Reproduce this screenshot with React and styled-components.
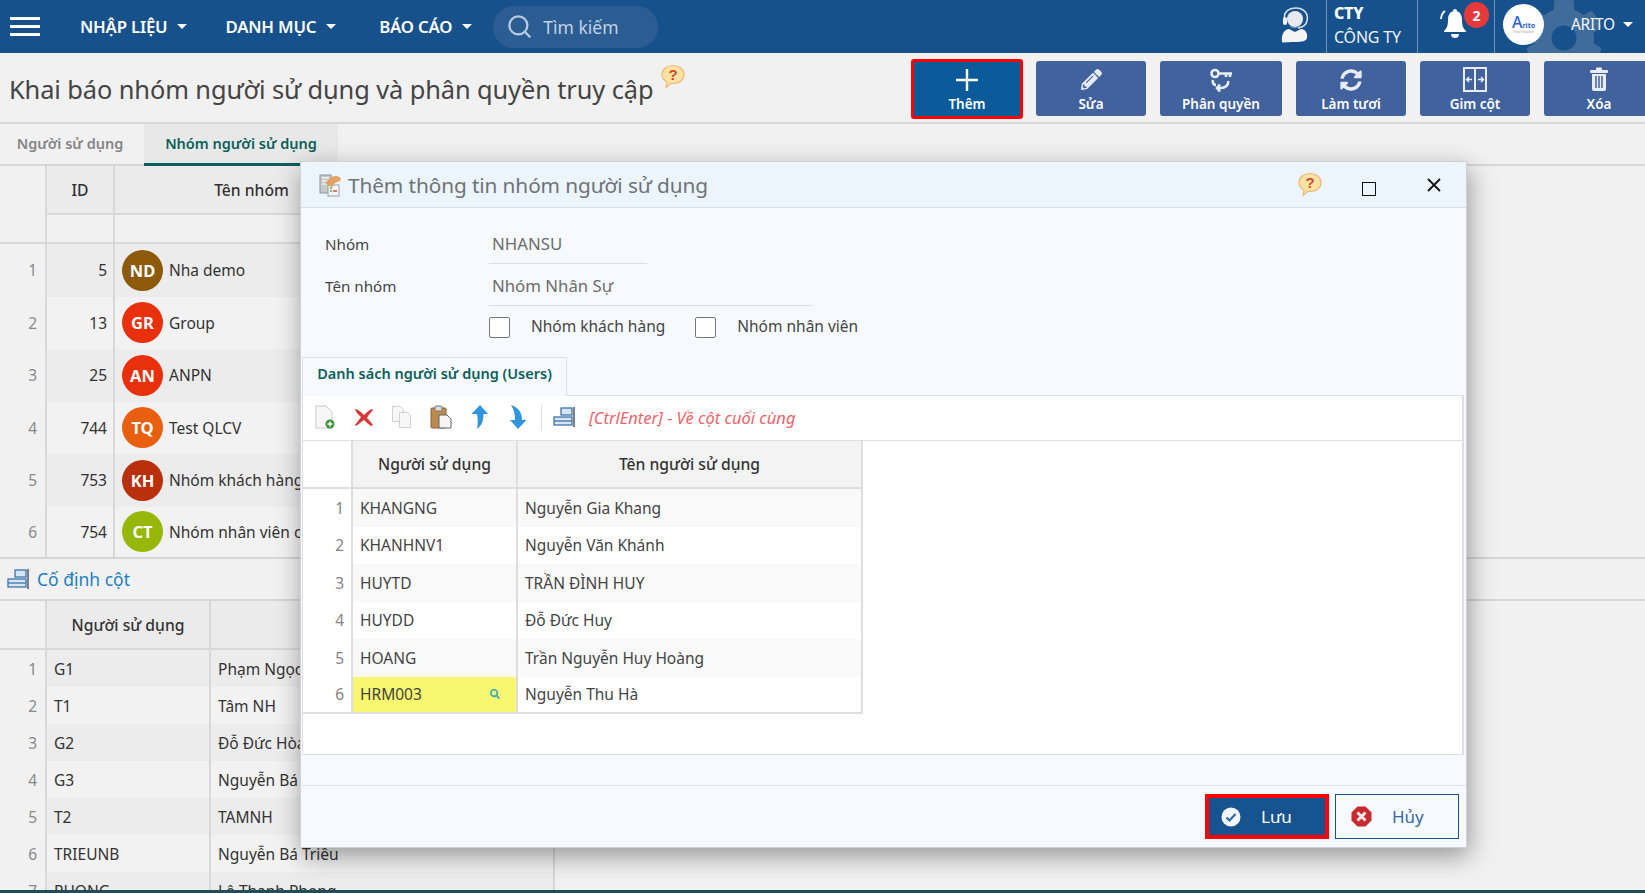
import React from "react";
import styled, { createGlobalStyle } from "styled-components";
import { FaCog, FaPencilAlt, FaSyncAlt, FaSearch } from "react-icons/fa";
import { Search as SearchGlyph } from "lucide-react";

const GlobalStyle = createGlobalStyle`
  html, body { margin: 0; padding: 0; background: #f1f1f1; }
  * { box-sizing: border-box; }
  body { font-family: "Noto Sans", "Open Sans", sans-serif; color: #333; overflow: hidden; }
`;

const Page = styled.div`
  position: relative;
  width: 1645px;
  height: 893px;
  overflow: hidden;
  display: flex;
  flex-direction: column;
  background: #f1f1f1;
`;

/* top bar */
const Header = styled.header`
  height: 53px;
  flex: none;
  display: flex;
  align-items: center;
  background: #17518b;
  color: #fff;
  padding-left: 10px;
`;

const Burger = styled.div`
  width: 30px;
  height: 19px;
  margin-right: 40px;
  display: flex;
  flex-direction: column;
  justify-content: space-between;
  span { height: 3px; background: #fff; display: block; }
`;

const NavItem = styled.div`
  display: flex;
  align-items: center;
  gap: 10px;
  margin-right: ${(p) => p.$gap}px;
  font-size: 16.8px;
  font-weight: 600;
  white-space: nowrap;
  letter-spacing: -0.2px;
`;

const Caret = styled.i`
  display: block;
  width: 0;
  height: 0;
  border-left: 5px solid transparent;
  border-right: 5px solid transparent;
  border-top: 5px solid #fff;
`;

const Search = styled.div`
  width: 165px;
  height: 42px;
  border-radius: 21px;
  background: #2b5d92;
  display: flex;
  align-items: center;
  gap: 10px;
  padding-left: 13px;
  color: #c3d2e2;
  font-size: 17.5px;
  svg { color: #b9cbde; }
`;

const HeaderRight = styled.div`
  margin-left: auto;
  height: 100%;
  display: flex;
`;

const HeaderCell = styled.div`
  position: relative;
  height: 100%;
  width: ${(p) => p.$w}px;
  display: flex;
  align-items: center;
  border-left: ${(p) => (p.$line ? "1px solid #6d93ba" : "none")};
`;

const Company = styled.div`
  padding: 0 0 3px 7px;
  font-size: 16px;
  line-height: 24px;
  letter-spacing: -0.2px;
  color: #eef3f8;
  b { display: block; font-weight: 800; color: #fff; }
`;

const Badge = styled.span`
  position: absolute;
  left: 46px;
  top: 2px;
  width: 25px;
  height: 26px;
  border-radius: 50%;
  background: #e53a3c;
  color: #fff;
  font-size: 14px;
  font-weight: 700;
  display: flex;
  align-items: center;
  justify-content: center;
`;

const Gear = styled.div`
  position: absolute;
  inset: 0;
  overflow: hidden;
  color: #3f6c9b;
  svg { position: absolute; left: 29px; top: -2px; }
`;

const Logo = styled.div`
  position: relative;
  width: 41px;
  height: 41px;
  margin: 0 0 4px 8px;
  border-radius: 50%;
  background: #fff;
  color: #2b61d8;
  display: flex;
  flex-direction: column;
  align-items: center;
  justify-content: center;
  font-size: 7px;
  font-weight: 700;
  line-height: 9px;
  big { font-size: 16px; line-height: 13px; font-weight: 500; }
  small { font-size: 3px; line-height: 4px; font-weight: 400; color: #9a9a9a; }
`;

const UserName = styled.div`
  position: relative;
  margin: 0 0 5px 27px;
  display: flex;
  align-items: center;
  gap: 8px;
  font-size: 15.5px;
  letter-spacing: -0.3px;
  color: #f3f6fa;
`;

/* title and action buttons */
const ActionBar = styled.div`
  height: 71px;
  flex: none;
  display: flex;
  padding: 8px 0 0 9px;
  border-bottom: 2px solid #d6d6d6;
`;

const Title = styled.h1`
  margin: 0;
  padding-top: 9px;
  font-size: 25.4px;
  line-height: 38px;
  font-weight: 400;
  color: #444;
  letter-spacing: -0.1px;
  white-space: nowrap;
`;

const TitleHelp = styled.div`
  margin: 3px 0 0 7px;
`;

const Actions = styled.div`
  margin-left: auto;
  margin-right: -9px;
  display: flex;
  gap: 14px;
  align-items: flex-start;
`;

const ActionButton = styled.button`
  flex: none;
  width: ${(p) => (p.$active ? 112 : p.$w || 110)}px;
  height: ${(p) => (p.$active ? 60 : 55)}px;
  margin: ${(p) => (p.$active ? "-2px -1px 0 0" : "0")};
  padding: 0 0 3px;
  background: ${(p) => (p.$active ? "#0b5b9b" : "#41629d")};
  border: ${(p) => (p.$active ? "3px solid #ff0000" : "none")};
  border-radius: 3px;
  color: #fff;
  font-family: inherit;
  font-size: 13.5px;
  font-weight: 600;
  line-height: 18px;
  display: flex;
  flex-direction: column;
  align-items: center;
  justify-content: flex-end;
`;

const ActionIcon = styled.span`
  height: 25px;
  margin-bottom: 3px;
  display: flex;
  align-items: center;
  color: #e8edf5;
`;

/* tabs */
const Tabs = styled.div`
  height: 42px;
  flex: none;
  display: flex;
  border-bottom: 2px solid #d6d6d6;
`;

const Tab = styled.div`
  width: ${(p) => p.$w}px;
  height: 42px;
  margin-left: ${(p) => (p.$active ? 4 : 0)}px;
  text-align: center;
  font-size: 14.5px;
  line-height: 39px;
  font-weight: 600;
  color: ${(p) => (p.$active ? "#0b5f5b" : "#858585")};
  background: ${(p) => (p.$active ? "#e8e8e8" : "transparent")};
  border-bottom: ${(p) => (p.$active ? "3px solid #0b5f5b" : "none")};
`;

/* background grids */
const Grid = styled.div`
  width: ${(p) => p.$w}px;
  display: grid;
  grid-template-columns: ${(p) => p.$cols};
`;

const HeadCell = styled.div`
  height: ${(p) => p.$h}px;
  display: flex;
  align-items: center;
  justify-content: center;
  font-size: 15.7px;
  font-weight: 500;
  color: #333;
  background: ${(p) => (p.$plain ? "transparent" : "#ebebeb")};
  border-right: 2px solid #d8d8d8;
  border-bottom: ${(p) => (p.$open ? "none" : "2px solid #d8d8d8")};
`;

const FilterCell = styled.div`
  height: 29px;
  border-right: 2px solid #d8d8d8;
  border-bottom: 2px solid #d8d8d8;
`;

const NumCell = styled.div`
  height: ${(p) => p.$h}px;
  display: flex;
  align-items: center;
  justify-content: flex-end;
  padding-right: 8px;
  font-size: 15.5px;
  color: #8a8a8a;
  border-right: 2px solid #d8d8d8;
  border-bottom: ${(p) => (p.$last ? "2px solid #d8d8d8" : "none")};
`;

const Cell = styled.div`
  height: ${(p) => p.$h}px;
  display: flex;
  align-items: center;
  justify-content: ${(p) => (p.$right ? "flex-end" : "flex-start")};
  padding: 0 ${(p) => (p.$right ? 6 : 7)}px;
  font-size: 15.5px;
  color: #333;
  white-space: nowrap;
  overflow: hidden;
  background: ${(p) => (p.$odd ? "#ececec" : "#f2f2f2")};
  border-right: 2px solid #d8d8d8;
  border-bottom: ${(p) => (p.$last ? "2px solid #d8d8d8" : "none")};
`;

const Avatar = styled.span`
  flex: none;
  width: 41px;
  height: 41px;
  margin-right: 6px;
  border-radius: 50%;
  background: ${(p) => p.$color};
  color: #fff;
  font-size: 16.5px;
  font-weight: 700;
  display: flex;
  align-items: center;
  justify-content: center;
`;

const SectionBar = styled.div`
  height: 44px;
  flex: none;
  margin-top: -2px;
  display: flex;
  align-items: center;
  gap: 8px;
  padding-left: 7px;
  color: #1d7fc1;
  font-size: 17.5px;
  border-top: 2px solid #d6d6d6;
  border-bottom: 2px solid #d6d6d6;
`;

const LowerWrap = styled.div`
  flex: 1;
  overflow: hidden;
`;

const BottomLine = styled.div`
  height: 3px;
  flex: none;
  background: #1f4d5c;
`;

/* dialog */
const Modal = styled.div`
  position: absolute;
  left: 300px;
  top: 161px;
  width: 1167px;
  height: 687px;
  display: flex;
  flex-direction: column;
  background: #f6fafe;
  border: 1px solid #cfd3d6;
  box-shadow: 2px 8px 24px rgba(0, 0, 0, 0.38);
`;

const ModalHead = styled.div`
  height: 46px;
  flex: none;
  display: flex;
  align-items: center;
  padding-left: 17px;
  background: #edf5fc;
  border-bottom: 1px solid #dcdfe2;
`;

const ModalTitle = styled.div`
  margin-left: 6px;
  font-size: 20.8px;
  color: #6d7378;
  letter-spacing: -0.1px;
`;

const ModalControls = styled.div`
  margin-left: auto;
  display: flex;
  align-items: center;
  padding-right: 25px;
`;

const MaxBox = styled.span`
  display: block;
  width: 14px;
  height: 14px;
  margin: 8px 51px 0 39px;
  border: 1.5px solid #111;
`;

const FormRow = styled.div`
  display: flex;
  height: ${(p) => p.$h}px;
  padding: ${(p) => p.$top}px 0 0 24px;
`;

const FieldLabel = styled.div`
  width: 164px;
  font-size: 15.2px;
  line-height: 30px;
  color: #444;
`;

const FieldValue = styled.div`
  width: ${(p) => p.$w}px;
  height: 35px;
  padding-left: 3px;
  font-size: 16.8px;
  line-height: 30px;
  color: #6c6c6c;
  border-bottom: 1px solid #dcdfe3;
`;

const CheckRow = styled.div`
  display: flex;
  align-items: center;
  margin: 11px 0 0 188px;
  height: 21px;
`;

const Box = styled.span`
  flex: none;
  width: 21px;
  height: 21px;
  border: 1px solid #777;
  border-radius: 2px;
  background: #fff;
`;

const CheckLabel = styled.span`
  margin: 0 ${(p) => p.$gap}px 0 21px;
  padding-bottom: 3px;
  font-size: 15.5px;
  color: #444;
  white-space: nowrap;
`;

const InnerTabs = styled.div`
  margin: 19px 0 0 1px;
  height: 38px;
  display: flex;
`;

const InnerTab = styled.div`
  position: relative;
  z-index: 1;
  width: 265px;
  height: 39px;
  background: #f6fafe;
  border: 1px solid #dcdfe3;
  border-bottom: none;
  text-align: center;
  font-size: 14.5px;
  font-weight: 600;
  line-height: 31px;
  color: #0b5f5b;
`;

const Panel = styled.div`
  margin: 0 2px 0 1px;
  height: 360px;
  display: flex;
  flex-direction: column;
  background: #fff;
  border: 1px solid #dcdfe3;
  border-right-width: 2px;
`;

const Toolbar = styled.div`
  height: 45px;
  flex: none;
  display: flex;
  align-items: center;
  padding: 0 0 2px 3px;
  border-bottom: 1px solid #dcdfe3;
`;

const ToolSlot = styled.span`
  width: 38.5px;
  display: flex;
  justify-content: center;
`;

const ToolSep = styled.span`
  width: 1px;
  height: 25px;
  margin: 0 11px 0 4px;
  background: #dcdfe3;
`;

const ToolHint = styled.span`
  margin-left: 14px;
  font-size: 16.5px;
  font-style: italic;
  color: #f0636b;
`;

const UserGrid = styled.div`
  width: 560px;
  display: grid;
  grid-template-columns: 50px 165px 345px;
`;

const UserHead = styled.div`
  height: 48px;
  display: flex;
  align-items: center;
  justify-content: center;
  font-size: 15.7px;
  font-weight: 500;
  color: #333;
  background: ${(p) => (p.$plain ? "#fff" : "#f3f3f3")};
  border-right: 2px solid #dedede;
  border-bottom: 2px solid #dedede;
`;

const UserNum = styled.div`
  height: 37.5px;
  display: flex;
  align-items: center;
  justify-content: flex-end;
  padding-right: 7px;
  font-size: 15.5px;
  color: #858585;
  border-right: 2px solid #dedede;
  border-bottom: ${(p) => (p.$last ? "2px solid #dedede" : "none")};
`;

const UserCell = styled.div`
  height: 37.5px;
  display: flex;
  align-items: center;
  justify-content: space-between;
  padding: 0 8px 0 7px;
  font-size: 15.5px;
  color: #444;
  background: ${(p) => (p.$hit ? "#f8f76f" : p.$odd ? "#f9f9f9" : "#fff")};
  border-right: 2px solid #dedede;
  border-bottom: ${(p) => (p.$last ? "2px solid #dedede" : "none")};
  svg { color: #31a3c6; margin-right: 8px; }
`;

const ModalFoot = styled.div`
  margin-top: 30px;
  flex: 1;
  display: flex;
  justify-content: flex-end;
  gap: 6px;
  padding: 8px 7px 0 0;
  border-top: 1px solid #e2e4e6;
`;

const FootButton = styled.button`
  width: 124px;
  height: 45px;
  padding: 0 0 0 ${(p) => (p.$primary ? 12 : 15)}px;
  display: flex;
  align-items: center;
  gap: 20px;
  font-family: inherit;
  font-size: 17px;
  color: ${(p) => (p.$primary ? "#fff" : "#35699f")};
  background: ${(p) => (p.$primary ? "#17548f" : "transparent")};
  border: ${(p) => (p.$primary ? "4px solid #ff0000" : "1px solid #17548f")};
`;

const groups = [
  { id: 5, code: "ND", name: "Nha demo", color: "#8c5a0a" },
  { id: 13, code: "GR", name: "Group", color: "#e8300c" },
  { id: 25, code: "AN", name: "ANPN", color: "#e8300c" },
  { id: 744, code: "TQ", name: "Test QLCV", color: "#e95f10" },
  { id: 753, code: "KH", name: "Nhóm khách hàng", color: "#b8300c" },
  { id: 754, code: "CT", name: "Nhóm nhân viên công ty", color: "#97b80a" },
];

const lowerUsers = [
  ["G1", "Phạm Ngọc"],
  ["T1", "Tâm NH"],
  ["G2", "Đỗ Đức Hòa"],
  ["G3", "Nguyễn Bá"],
  ["T2", "TAMNH"],
  ["TRIEUNB", "Nguyễn Bá Triều"],
  ["PHONG", "Lê Thanh Phong"],
];

const dialogUsers = [
  ["KHANGNG", "Nguyễn Gia Khang"],
  ["KHANHNV1", "Nguyễn Văn Khánh"],
  ["HUYTD", "TRẦN ĐÌNH HUY"],
  ["HUYDD", "Đỗ Đức Huy"],
  ["HOANG", "Trần Nguyễn Huy Hoàng"],
  ["HRM003", "Nguyễn Thu Hà"],
];

const HelpIcon = () => (
  <svg width="26" height="25" viewBox="0 0 26 25">
    <path d="M13 1.500c6 0 11 3.700 11 9s-5 9-10.500 9c-.8 0-1.600-.1-2.300-.2L6 23.500l1-5.500C3.800 16.300 2 13.700 2 10.500c0-5.300 5-9 11-9z" fill="#fbe3a4" stroke="#eeb775" strokeWidth="1.200" />
    <text x="13" y="16" textAnchor="middle" fontSize="15" fontWeight="700" fill="#d9462c" fontFamily="Liberation Sans, sans-serif">?</text>
  </svg>
);

const SupportIcon = () => (
  <svg width="34" height="36" viewBox="0 0 34 36" fill="none" style={{ marginLeft: 3, marginBottom: 4 }}>
    <circle cx="16" cy="12" r="8" fill="#e6eaee" />
    <path d="M6 15C3 4 11 1 17 1s13 4 11 13c-.6 3-3 6-9 7" stroke="#d9dfe6" strokeWidth="1.500" />
    <rect x="4" y="10" width="4" height="8" rx="2" fill="#f4f4f4" />
    <path d="M11 19c2 2 8 2 10 0" stroke="#8fa4ba" strokeWidth="1" />
    <path d="M3 35c-1-8 3-13 7-13l6 3 6-3c4 0 7 4 6 9-.6 3-5 4-12 4S3 36 3 35z" fill="#f4f4f4" />
  </svg>
);

const BellIcon = () => (
  <svg width="32" height="32" viewBox="0 0 32 32" fill="#fff" style={{ marginLeft: 20, marginBottom: 6 }}>
    <circle cx="17" cy="3" r="2" />
    <path d="M17 3c5 0 7 4 7 9 0 7 2 9 4 11v1H6v-1c2-2 4-4 4-11 0-5 2-9 7-9z" />
    <path d="M13 26h8c0 3-2 4-4 4s-4-1-4-4z" />
    <path d="M7 3C4.500 5 3 8 3 11" fill="none" stroke="#fff" strokeWidth="1.800" />
  </svg>
);

const KeyIcon = () => (
  <svg width="24" height="24" viewBox="0 0 24 24" fill="none" stroke="#e8edf5" strokeWidth="2.600">
    <circle cx="6" cy="5.500" r="3.500" />
    <path d="M10 5.500h13M17 5.500v3.500M21 5.500v3.500" />
    <path d="M19 13c1 4-3 7-7 7H9M11 16.500L8 20l3 3.500" />
    <path d="M4 12c-1 3 1 5 3 5" />
  </svg>
);

const ColumnsIcon = () => (
  <svg width="24" height="25" viewBox="0 0 24 25" fill="none" stroke="#e8edf5">
    <rect x="1" y="1" width="22" height="23" strokeWidth="2" />
    <path d="M12 1v23" strokeWidth="2" />
    <path d="M9 12.500H3.500M6 10l-2.500 2.500L6 15M15 12.500h5.500M18 10l2.500 2.500L18 15" strokeWidth="1.500" />
  </svg>
);

const TrashIcon = () => (
  <svg width="20" height="25" viewBox="0 0 20 25" fill="#e8edf5">
    <rect x="1" y="3" width="18" height="3" rx="1" />
    <rect x="7" y="0.500" width="6" height="3" rx="1" />
    <path d="M3 7h14v15a2 2 0 0 1-2 2H5a2 2 0 0 1-2-2z" />
    <path d="M7 9v12M10 9v12M13 9v12" stroke="#41629d" strokeWidth="1.500" />
  </svg>
);

const TitleIcon = () => (
  <svg width="24" height="24" viewBox="0 0 24 24">
    <rect x="2" y="2" width="11" height="18" fill="#c6c9cc" stroke="#8f9499" />
    <path d="M4 5h7M4 8h7M4 11h7" stroke="#eef0f2" strokeWidth="1.500" />
    <rect x="10" y="12" width="11" height="11" fill="#f4f4f4" stroke="#9ba0a5" />
    <path d="M12 15h2M12 18h2" stroke="#57a957" strokeWidth="1.500" />
    <path d="M15 18h4" stroke="#d94f4f" strokeWidth="1.500" />
    <path d="M7 10l6-6c2-1 4-1 6-1l4 2-1 3-5 2-3 4-3-1-4-3z" fill="#e0a566" />
  </svg>
);

const NewDocIcon = () => (
  <svg width="22" height="24" viewBox="0 0 22 24">
    <path d="M2 1h10l6 6v16H2z" fill="#f7f7f7" stroke="#c9c9c9" />
    <circle cx="16" cy="19" r="4.500" fill="#3f9140" />
    <path d="M13.500 19h5M16 16.500v5" stroke="#fff" strokeWidth="1.500" />
  </svg>
);

const DeleteIcon = () => (
  <svg width="20" height="20" viewBox="0 0 20 20">
    <path d="M1 2c3 0 6 3 9 6 2-2 5-5 8-6l1 1c-2 3-5 5-6 8 2 2 4 4 6 7l-2 1c-3-2-5-4-7-6-3 2-5 4-8 6l-1-1c2-3 4-5 6-8C5 8 2 6 1 2z" fill="#d43a3a" />
  </svg>
);

const CopyIcon = () => (
  <svg width="22" height="24" viewBox="0 0 22 24" fill="#f7f7f7" stroke="#d0d0d0">
    <path d="M1.500 1.500h8l3 3v12h-11z" />
    <path d="M8.500 7.500h8l3 3v12h-11z" />
  </svg>
);

const PasteIcon = () => (
  <svg width="22" height="24" viewBox="0 0 22 24">
    <rect x="1" y="3" width="15" height="20" rx="1" fill="#bb8a4e" stroke="#8a6130" />
    <rect x="5" y="1" width="7" height="5" rx="1" fill="#ddd" stroke="#777" />
    <path d="M9 10h8l4 4v9H9z" fill="#f5f5f5" stroke="#666" />
  </svg>
);

const UpIcon = () => (
  <svg width="18" height="24" viewBox="0 0 18 24">
    <path d="M10 0l8 9h-4.500c0 6-1 11-6.500 15 1-4 1-10 0-15H1.500z" fill="#2f95dc" />
  </svg>
);

const DownIcon = () => (
  <svg width="18" height="24" viewBox="0 0 18 24">
    <path d="M9 24l-8-9h5C6 9 5 5 2 0c6 2 11 6 11 15h4.500z" fill="#2f95dc" />
  </svg>
);

const FixColumnIcon = () => (
  <svg width="22" height="22" viewBox="0 0 22 22" fill="#d6e6f5" stroke="#3f74a8" strokeWidth="1.300">
    <rect x="8" y="2" width="11" height="7" />
    <rect x="1" y="11" width="18" height="8" />
    <path d="M1 15h18" />
    <path d="M21 1v20" stroke="#556" strokeWidth="1.500" />
  </svg>
);

const SaveIcon = () => (
  <svg width="20" height="20" viewBox="0 0 20 20">
    <circle cx="10" cy="10" r="9.500" fill="#f2f5f9" />
    <path d="M5.500 10.500l3 3 6-6.500" fill="none" stroke="#2d6aa3" strokeWidth="2.200" />
  </svg>
);

const CancelIcon = () => (
  <svg width="21" height="21" viewBox="0 0 21 21">
    <path d="M6.500 0.500h8l6 6v8l-6 6h-8l-6-6v-8z" fill="#c92a2f" />
    <path d="M6.500 6.500l8 8M14.500 6.500l-8 8" stroke="#fbeaea" strokeWidth="3" />
  </svg>
);

const toolIcons = [NewDocIcon, DeleteIcon, CopyIcon, PasteIcon, UpIcon, DownIcon];

export default function App() {
  return (
    <Page>
      <GlobalStyle />
      <Header>
        <Burger>
          <span />
          <span />
          <span />
        </Burger>
        <NavItem $gap={38}>NHẬP LIỆU <Caret /></NavItem>
        <NavItem $gap={43}>DANH MỤC <Caret /></NavItem>
        <NavItem $gap={21}>BÁO CÁO <Caret /></NavItem>
        <Search>
          <SearchGlyph size={27} strokeWidth={2} />
          Tìm kiếm
        </Search>
        <HeaderRight>
          <HeaderCell $w={50}>
            <SupportIcon />
          </HeaderCell>
          <HeaderCell $w={91} $line>
            <Company>
              <b>CTY</b>
              CÔNG TY
            </Company>
          </HeaderCell>
          <HeaderCell $w={77} $line>
            <BellIcon />
            <Badge>2</Badge>
          </HeaderCell>
          <HeaderCell $w={151} $line>
            <Gear>
              <FaCog size={80} />
            </Gear>
            <Logo>
              <span><big>A</big>rito</span>
              <small>Smart Solution</small>
            </Logo>
            <UserName>
              ARITO <Caret />
            </UserName>
          </HeaderCell>
        </HeaderRight>
      </Header>

      <ActionBar>
        <Title>Khai báo nhóm người sử dụng và phân quyền truy cập</Title>
        <TitleHelp>
          <HelpIcon />
        </TitleHelp>
        <Actions>
          <ActionButton $active>
            <ActionIcon>
              <svg width="22" height="22" viewBox="0 0 22 22" stroke="#fff" strokeWidth="2.400">
                <path d="M11 0v22M0 11h22" />
              </svg>
            </ActionIcon>
            Thêm
          </ActionButton>
          <ActionButton>
            <ActionIcon><FaPencilAlt size={21} /></ActionIcon>
            Sửa
          </ActionButton>
          <ActionButton $w={122}>
            <ActionIcon><KeyIcon /></ActionIcon>
            Phân quyền
          </ActionButton>
          <ActionButton>
            <ActionIcon><FaSyncAlt size={22} /></ActionIcon>
            Làm tươi
          </ActionButton>
          <ActionButton>
            <ActionIcon><ColumnsIcon /></ActionIcon>
            Gim cột
          </ActionButton>
          <ActionButton>
            <ActionIcon><TrashIcon /></ActionIcon>
            Xóa
          </ActionButton>
        </Actions>
      </ActionBar>

      <Tabs>
        <Tab $w={140}>Người sử dụng</Tab>
        <Tab $w={194} $active>Nhóm người sử dụng</Tab>
      </Tabs>

      <Grid $w={400} $cols="47px 68px 1fr">
        <HeadCell $h={49} $plain $open />
        <HeadCell $h={49}>ID</HeadCell>
        <HeadCell $h={49}>
          <span style={{ marginRight: 10 }}>Tên nhóm</span>
        </HeadCell>
        <FilterCell />
        <FilterCell />
        <FilterCell />
        {groups.map((g, i) => {
          const last = i === groups.length - 1;
          return (
            <React.Fragment key={g.id}>
              <NumCell $h={52.5} $last={last}>{i + 1}</NumCell>
              <Cell $h={52.5} $right $odd={i % 2 === 0} $last={last}>{g.id}</Cell>
              <Cell $h={52.5} $odd={i % 2 === 0} $last={last}>
                <Avatar $color={g.color}>{g.code}</Avatar>
                {g.name}
              </Cell>
            </React.Fragment>
          );
        })}
      </Grid>

      <SectionBar>
        <FixColumnIcon />
        Cố định cột
      </SectionBar>

      <LowerWrap>
        <Grid $w={555} $cols="47px 164px 344px">
          <HeadCell $h={49} $plain />
          <HeadCell $h={49}>Người sử dụng</HeadCell>
          <HeadCell $h={49} />
          {lowerUsers.map(([code, name], i) => (
            <React.Fragment key={code}>
              <NumCell $h={37}>{i + 1}</NumCell>
              <Cell $h={37} $odd={i % 2 === 0}>{code}</Cell>
              <Cell $h={37} $odd={i % 2 === 0}>{name}</Cell>
            </React.Fragment>
          ))}
        </Grid>
      </LowerWrap>
      <BottomLine />

      <Modal>
        <ModalHead>
          <TitleIcon />
          <ModalTitle>Thêm thông tin nhóm người sử dụng</ModalTitle>
          <ModalControls>
            <HelpIcon />
            <MaxBox />
            <svg width="14" height="14" viewBox="0 0 14 14" stroke="#111" strokeWidth="1.800">
              <path d="M1 1l12 12M13 1L1 13" />
            </svg>
          </ModalControls>
        </ModalHead>

        <FormRow $h={56} $top={21}>
          <FieldLabel>Nhóm</FieldLabel>
          <FieldValue $w={158}>NHANSU</FieldValue>
        </FormRow>
        <FormRow $h={42} $top={7}>
          <FieldLabel>Tên nhóm</FieldLabel>
          <FieldValue $w={323}>Nhóm Nhân Sự</FieldValue>
        </FormRow>
        <CheckRow>
          <Box />
          <CheckLabel $gap={30}>Nhóm khách hàng</CheckLabel>
          <Box />
          <CheckLabel $gap={0}>Nhóm nhân viên</CheckLabel>
        </CheckRow>

        <InnerTabs>
          <InnerTab>Danh sách người sử dụng (Users)</InnerTab>
        </InnerTabs>
        <Panel>
          <Toolbar>
            {toolIcons.map((Icon, i) => (
              <ToolSlot key={i}>
                <Icon />
              </ToolSlot>
            ))}
            <ToolSep />
            <FixColumnIcon />
            <ToolHint>[CtrlEnter] - Về cột cuối cùng</ToolHint>
          </Toolbar>
          <UserGrid>
            <UserHead $plain />
            <UserHead>Người sử dụng</UserHead>
            <UserHead>Tên người sử dụng</UserHead>
            {dialogUsers.map(([code, name], i) => {
              const last = i === dialogUsers.length - 1;
              return (
                <React.Fragment key={code}>
                  <UserNum $last={last}>{i + 1}</UserNum>
                  <UserCell $odd={i % 2 === 0} $hit={last} $last={last}>
                    {code}
                    {last && <FaSearch size={10} />}
                  </UserCell>
                  <UserCell $odd={i % 2 === 0} $last={last}>{name}</UserCell>
                </React.Fragment>
              );
            })}
          </UserGrid>
        </Panel>

        <ModalFoot>
          <FootButton $primary>
            <SaveIcon />
            Lưu
          </FootButton>
          <FootButton>
            <CancelIcon />
            Hủy
          </FootButton>
        </ModalFoot>
      </Modal>
    </Page>
  );
}
